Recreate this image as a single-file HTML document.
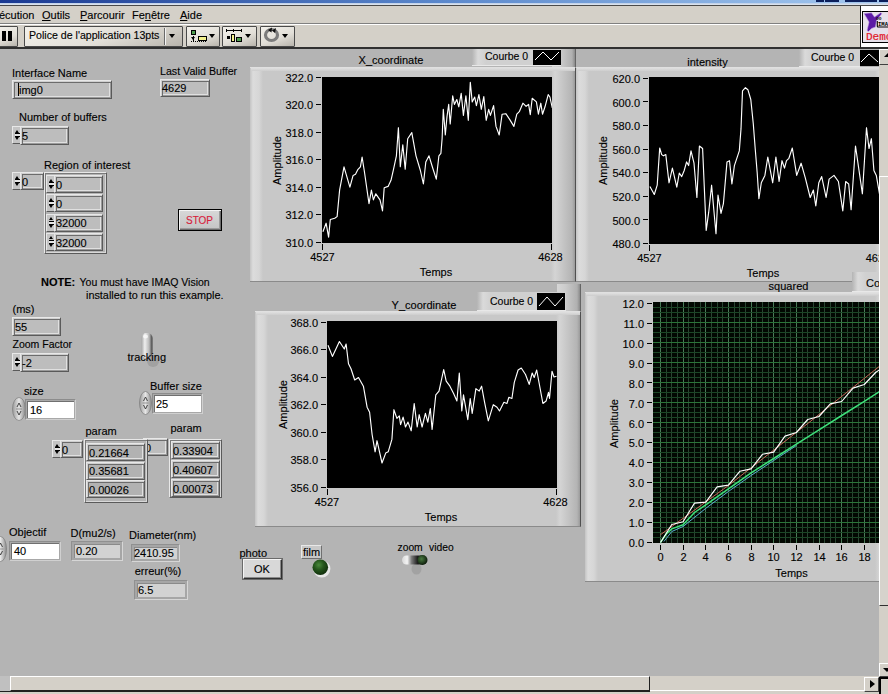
<!DOCTYPE html>
<html><head><meta charset="utf-8"><title>LabVIEW panel</title>
<style>
html,body{margin:0;padding:0;}
body{width:888px;height:694px;overflow:hidden;background:#b4b4b4;font-family:"Liberation Sans", sans-serif;}
.page{position:relative;width:888px;height:694px;overflow:hidden;background:#b4b4b4;}
.t{position:absolute;white-space:nowrap;line-height:1;font-family:"Liberation Sans", sans-serif;-webkit-text-stroke-width:0.12px;}
.tri{position:absolute;width:0;height:0;border-left:4px solid transparent;border-right:4px solid transparent;border-top:4px solid #000;}
u{text-decoration:underline;}
</style></head><body>
<div class="page">
<div style="position:absolute;left:0px;top:0px;width:888px;height:3px;background:linear-gradient(90deg,#1b3a92 0%,#5b88cc 50%,#a6caf0 100%)"></div>
<div style="position:absolute;left:816px;top:0px;width:8px;height:2px;background:#0b1f5c"></div>
<div style="position:absolute;left:825px;top:0px;width:14px;height:2px;background:#0b1f5c"></div>
<div style="position:absolute;left:845px;top:0px;width:32px;height:2px;background:#0b1f5c"></div>
<div style="position:absolute;left:879px;top:0px;width:9px;height:2px;background:#0b1f5c"></div>
<div style="position:absolute;left:0px;top:3px;width:888px;height:2px;background:linear-gradient(180deg,#b8cce8,#e4e8ee)"></div>
<div style="position:absolute;left:0px;top:5px;width:888px;height:1px;background:#4a4a4a"></div>
<div style="position:absolute;left:0px;top:6px;width:888px;height:17px;background:#d4d0c8"></div>
<div style="position:absolute;left:0px;top:23px;width:888px;height:1px;background:#808080"></div>
<div style="position:absolute;left:0px;top:24px;width:888px;height:1px;background:#ffffff"></div>
<div style="position:absolute;left:0px;top:25px;width:888px;height:22px;background:#d4d0c8"></div>
<div style="position:absolute;left:0px;top:47px;width:888px;height:2px;background:#303030"></div>
<div class="t" style="left:-1px;top:10.19px;font-size:11px;color:#000;">écution</div>
<div class="t" style="left:42px;top:10.19px;font-size:11px;color:#000;"><u>O</u>utils</div>
<div class="t" style="left:80px;top:10.19px;font-size:11px;color:#000;"><u>P</u>arcourir</div>
<div class="t" style="left:132px;top:10.19px;font-size:11px;color:#000;">Fe<u>n</u>être</div>
<div class="t" style="left:180px;top:10.19px;font-size:11px;color:#000;"><u>A</u>ide</div>
<div style="position:absolute;left:-2px;top:26px;width:20px;height:21px;background:linear-gradient(160deg,#f2f0ea 0%,#e2dfd8 55%,#b8b4ac 100%);border:1px solid #4a4a4a;box-sizing:border-box;border-radius:1px"></div>
<div style="position:absolute;left:2px;top:31px;width:4px;height:10px;background:#000"></div>
<div style="position:absolute;left:8px;top:31px;width:4px;height:10px;background:#000"></div>
<div style="position:absolute;left:24px;top:26px;width:159px;height:21px;background:linear-gradient(160deg,#f2f0ea 0%,#e2dfd8 55%,#b8b4ac 100%);border:1px solid #4a4a4a;box-sizing:border-box;border-radius:1px"></div>
<div class="t" style="left:29px;top:29.83px;font-size:10.6px;color:#000;">Police de l'application 13pts</div>
<div style="position:absolute;left:164px;top:28px;width:1px;height:17px;background:#6a6a6a"></div>
<div style="position:absolute;left:165px;top:28px;width:1px;height:17px;background:#f4f4f4"></div>
<div class="tri" style="left:169px;top:34px;border-left-width:3px;border-right-width:3px;border-top-width:4px"></div>
<div style="position:absolute;left:186px;top:26px;width:34px;height:21px;background:linear-gradient(160deg,#f2f0ea 0%,#e2dfd8 55%,#b8b4ac 100%);border:1px solid #4a4a4a;box-sizing:border-box;border-radius:1px"></div>
<div style="position:absolute;left:222px;top:26px;width:35px;height:21px;background:linear-gradient(160deg,#f2f0ea 0%,#e2dfd8 55%,#b8b4ac 100%);border:1px solid #4a4a4a;box-sizing:border-box;border-radius:1px"></div>
<div style="position:absolute;left:260px;top:26px;width:35px;height:21px;background:linear-gradient(160deg,#f2f0ea 0%,#e2dfd8 55%,#b8b4ac 100%);border:1px solid #4a4a4a;box-sizing:border-box;border-radius:1px"></div>
<div style="position:absolute;left:191px;top:30px;width:5px;height:5px;background:#4c9c4c;border:1px solid #000;box-sizing:border-box"></div>
<div style="position:absolute;left:193px;top:36px;width:1px;height:6px;background:#000"></div>
<div style="position:absolute;left:191px;top:37px;width:0;height:0;border-left:2.5px solid transparent;border-right:2.5px solid transparent;border-top:3px solid #000"></div>
<div style="position:absolute;left:191px;top:41px;width:1px;height:1px;background:#000"></div>
<div style="position:absolute;left:193px;top:41px;width:1px;height:1px;background:#000"></div>
<div style="position:absolute;left:195px;top:41px;width:1px;height:1px;background:#000"></div>
<div style="position:absolute;left:197px;top:41px;width:1px;height:1px;background:#000"></div>
<div style="position:absolute;left:199px;top:41px;width:1px;height:1px;background:#000"></div>
<div style="position:absolute;left:201px;top:41px;width:1px;height:1px;background:#000"></div>
<div style="position:absolute;left:203px;top:41px;width:1px;height:1px;background:#000"></div>
<div style="position:absolute;left:205px;top:41px;width:1px;height:1px;background:#000"></div>
<div style="position:absolute;left:198px;top:36px;width:9px;height:5px;background:#f2f08c;border:1px solid #000;box-sizing:border-box"></div>
<div class="tri" style="left:209px;top:34px;border-left-width:3px;border-right-width:3px;border-top-width:4px"></div>
<div style="position:absolute;left:226px;top:30px;width:16px;height:1px;background:#000"></div>
<div style="position:absolute;left:226px;top:29px;width:1px;height:3px;background:#000"></div>
<div style="position:absolute;left:233px;top:29px;width:1px;height:3px;background:#000"></div>
<div style="position:absolute;left:241px;top:29px;width:1px;height:3px;background:#000"></div>
<div style="position:absolute;left:227px;top:36px;width:3px;height:3px;background:#000"></div>
<div style="position:absolute;left:231px;top:34px;width:4px;height:8px;background:#f2f08c;border:1px solid #000;box-sizing:border-box"></div>
<div style="position:absolute;left:236px;top:37px;width:6px;height:5px;background:#4c9c4c;border:1px solid #000;box-sizing:border-box"></div>
<div class="tri" style="left:245px;top:34px;border-left-width:3px;border-right-width:3px;border-top-width:4px"></div>
<svg style="position:absolute;left:263px;top:27px" width="18" height="16"><ellipse cx="8.5" cy="8" rx="6" ry="5.5" fill="none" stroke="#7c7c7c" stroke-width="3.2"/><path d="M5 3 L9 0.5 L8.5 5.5 Z M9 3.5 L13 1 L12 6 Z" fill="#111"/></svg>
<div class="tri" style="left:282px;top:34px;border-left-width:3px;border-right-width:3px;border-top-width:4px"></div>
<div style="position:absolute;left:860px;top:6px;width:1px;height:42px;background:#202020"></div>
<div style="position:absolute;left:861px;top:6px;width:27px;height:41px;background:#ffffff"></div>
<div style="position:absolute;left:862px;top:11px;width:27px;height:32px;background:#e6e0ea;border:1.5px solid #000;box-sizing:border-box"></div>
<svg style="position:absolute;left:862px;top:11px" width="26" height="32"><path d="M2 2.5 L9.5 1.8 L12.5 6 L18.5 1.8 L20 2.6 L14.5 9.5 L13.5 16 L9.5 17.5 L6.5 20.5 L5 19.5 L7 11 Z" fill="#5c1aa6" stroke="#c8a8e8" stroke-width="0.6"/><text x="14" y="8.6" font-size="4.5" font-family="Liberation Mono" font-weight="bold" fill="#000">oo</text><path d="M15.3 10 V15.2 Q15.3 16 16 16 H27" fill="none" stroke="#000" stroke-width="1.1"/><text x="16" y="14.6" font-size="6.2" font-family="Liberation Mono" font-weight="bold" fill="#000" textLength="10" lengthAdjust="spacingAndGlyphs">IMA</text></svg>
<div class="t" style="left:866px;top:31.5px;font-size:11px;color:#e01828;font-family:'Liberation Mono',monospace;-webkit-text-stroke-width:0.2px">Demo</div>
<div class="t" style="left:12px;top:67.69px;font-size:11px;color:#000;">Interface Name</div>
<div style="position:absolute;left:12px;top:80px;width:100px;height:19px;background:#bdbdbd;border-top:1px solid #e8e8e8;border-left:1px solid #e8e8e8;border-right:1px solid #5a5a5a;border-bottom:1px solid #5a5a5a;box-sizing:border-box;box-shadow:inset 1px 1px 0 #cfcfcf, inset 2px 2px 0 #6c6c6c, inset -1px -1px 0 #9a9a9a, inset -2px -2px 0 #e0e0e0"></div>
<div style="position:absolute;left:18px;top:83px;width:1px;height:13px;background:#000"></div>
<div class="t" style="left:19px;top:84.69px;font-size:11px;color:#000;">img0</div>
<div class="t" style="left:160px;top:65.98px;font-size:10.65px;color:#000;">Last Valid Buffer</div>
<div style="position:absolute;left:160px;top:79px;width:50px;height:18px;background:#bdbdbd;border-top:1px solid #e8e8e8;border-left:1px solid #e8e8e8;border-right:1px solid #5a5a5a;border-bottom:1px solid #5a5a5a;box-sizing:border-box;box-shadow:inset 1px 1px 0 #cfcfcf, inset 2px 2px 0 #6c6c6c, inset -1px -1px 0 #9a9a9a, inset -2px -2px 0 #e0e0e0"></div>
<div class="t" style="left:162px;top:82.69px;font-size:11px;color:#000;">4629</div>
<div class="t" style="left:19px;top:111.69px;font-size:11px;color:#000;">Number of buffers</div>
<div style="position:absolute;left:12px;top:126px;width:8px;height:18px;background:#c4c4c4;border-top:1px solid #e8e8e8;border-left:1px solid #e8e8e8;border-bottom:1px solid #5a5a5a;box-sizing:border-box"></div>
<div style="position:absolute;left:15px;top:129.5px;width:0;height:0;border-left:2.5px solid transparent;border-right:2.5px solid transparent;border-bottom:3.5px solid #000"></div>
<div style="position:absolute;left:15px;top:133.0px;width:5px;height:1px;background:#000"></div>
<div style="position:absolute;left:15px;top:134.0px;width:5px;height:2px;background:#e6e6e6"></div>
<div style="position:absolute;left:15px;top:136.0px;width:5px;height:1px;background:#000"></div>
<div style="position:absolute;left:15px;top:137.0px;width:0;height:0;border-left:2.5px solid transparent;border-right:2.5px solid transparent;border-top:3.5px solid #000"></div>
<div style="position:absolute;left:20px;top:126px;width:49px;height:19px;background:#bdbdbd;border-top:1px solid #e8e8e8;border-left:1px solid #e8e8e8;border-right:1px solid #5a5a5a;border-bottom:1px solid #5a5a5a;box-sizing:border-box;box-shadow:inset 1px 1px 0 #cfcfcf, inset 2px 2px 0 #6c6c6c, inset -1px -1px 0 #9a9a9a, inset -2px -2px 0 #e0e0e0"></div>
<div class="t" style="left:22px;top:130.69px;font-size:11px;color:#000;">5</div>
<div class="t" style="left:44px;top:160.19px;font-size:11px;color:#000;">Region of interest</div>
<div style="position:absolute;left:12px;top:172px;width:8px;height:18px;background:#c4c4c4;border-top:1px solid #e8e8e8;border-left:1px solid #e8e8e8;border-bottom:1px solid #5a5a5a;box-sizing:border-box"></div>
<div style="position:absolute;left:15px;top:175.5px;width:0;height:0;border-left:2.5px solid transparent;border-right:2.5px solid transparent;border-bottom:3.5px solid #000"></div>
<div style="position:absolute;left:15px;top:179.0px;width:5px;height:1px;background:#000"></div>
<div style="position:absolute;left:15px;top:180.0px;width:5px;height:2px;background:#e6e6e6"></div>
<div style="position:absolute;left:15px;top:182.0px;width:5px;height:1px;background:#000"></div>
<div style="position:absolute;left:15px;top:183.0px;width:0;height:0;border-left:2.5px solid transparent;border-right:2.5px solid transparent;border-top:3.5px solid #000"></div>
<div style="position:absolute;left:20px;top:172px;width:24px;height:18px;background:#bdbdbd;border-top:1px solid #e8e8e8;border-left:1px solid #e8e8e8;border-right:1px solid #5a5a5a;border-bottom:1px solid #5a5a5a;box-sizing:border-box;box-shadow:inset 1px 1px 0 #cfcfcf, inset 2px 2px 0 #6c6c6c, inset -1px -1px 0 #9a9a9a, inset -2px -2px 0 #e0e0e0"></div>
<div class="t" style="left:22px;top:176.69px;font-size:11px;color:#000;">0</div>
<div style="position:absolute;left:44px;top:172px;width:63px;height:82px;border-top:1px solid #e8e8e8;border-left:1px solid #e8e8e8;border-right:1px solid #5a5a5a;border-bottom:1px solid #5a5a5a;box-sizing:border-box;box-shadow:inset 1px 1px 0 #7a7a7a, inset -1px -1px 0 #d8d8d8"></div>
<div style="position:absolute;left:46px;top:175.0px;width:8px;height:18px;background:#c4c4c4;border-top:1px solid #e8e8e8;border-left:1px solid #e8e8e8;border-bottom:1px solid #5a5a5a;box-sizing:border-box"></div>
<div style="position:absolute;left:49px;top:178.5px;width:0;height:0;border-left:2.5px solid transparent;border-right:2.5px solid transparent;border-bottom:3.5px solid #000"></div>
<div style="position:absolute;left:49px;top:182.0px;width:5px;height:1px;background:#000"></div>
<div style="position:absolute;left:49px;top:183.0px;width:5px;height:2px;background:#e6e6e6"></div>
<div style="position:absolute;left:49px;top:185.0px;width:5px;height:1px;background:#000"></div>
<div style="position:absolute;left:49px;top:186.0px;width:0;height:0;border-left:2.5px solid transparent;border-right:2.5px solid transparent;border-top:3.5px solid #000"></div>
<div style="position:absolute;left:54px;top:175.0px;width:49px;height:18px;background:#bdbdbd;border-top:1px solid #e8e8e8;border-left:1px solid #e8e8e8;border-right:1px solid #5a5a5a;border-bottom:1px solid #5a5a5a;box-sizing:border-box;box-shadow:inset 1px 1px 0 #cfcfcf, inset 2px 2px 0 #6c6c6c, inset -1px -1px 0 #9a9a9a, inset -2px -2px 0 #e0e0e0"></div>
<div class="t" style="left:56px;top:179.69px;font-size:11px;color:#000;">0</div>
<div style="position:absolute;left:46px;top:194.3px;width:8px;height:18px;background:#c4c4c4;border-top:1px solid #e8e8e8;border-left:1px solid #e8e8e8;border-bottom:1px solid #5a5a5a;box-sizing:border-box"></div>
<div style="position:absolute;left:49px;top:197.8px;width:0;height:0;border-left:2.5px solid transparent;border-right:2.5px solid transparent;border-bottom:3.5px solid #000"></div>
<div style="position:absolute;left:49px;top:201.3px;width:5px;height:1px;background:#000"></div>
<div style="position:absolute;left:49px;top:202.3px;width:5px;height:2px;background:#e6e6e6"></div>
<div style="position:absolute;left:49px;top:204.3px;width:5px;height:1px;background:#000"></div>
<div style="position:absolute;left:49px;top:205.3px;width:0;height:0;border-left:2.5px solid transparent;border-right:2.5px solid transparent;border-top:3.5px solid #000"></div>
<div style="position:absolute;left:54px;top:194.3px;width:49px;height:18px;background:#bdbdbd;border-top:1px solid #e8e8e8;border-left:1px solid #e8e8e8;border-right:1px solid #5a5a5a;border-bottom:1px solid #5a5a5a;box-sizing:border-box;box-shadow:inset 1px 1px 0 #cfcfcf, inset 2px 2px 0 #6c6c6c, inset -1px -1px 0 #9a9a9a, inset -2px -2px 0 #e0e0e0"></div>
<div class="t" style="left:56px;top:198.99px;font-size:11px;color:#000;">0</div>
<div style="position:absolute;left:46px;top:213.6px;width:8px;height:18px;background:#c4c4c4;border-top:1px solid #e8e8e8;border-left:1px solid #e8e8e8;border-bottom:1px solid #5a5a5a;box-sizing:border-box"></div>
<div style="position:absolute;left:49px;top:217.1px;width:0;height:0;border-left:2.5px solid transparent;border-right:2.5px solid transparent;border-bottom:3.5px solid #000"></div>
<div style="position:absolute;left:49px;top:220.6px;width:5px;height:1px;background:#000"></div>
<div style="position:absolute;left:49px;top:221.6px;width:5px;height:2px;background:#e6e6e6"></div>
<div style="position:absolute;left:49px;top:223.6px;width:5px;height:1px;background:#000"></div>
<div style="position:absolute;left:49px;top:224.6px;width:0;height:0;border-left:2.5px solid transparent;border-right:2.5px solid transparent;border-top:3.5px solid #000"></div>
<div style="position:absolute;left:54px;top:213.6px;width:49px;height:18px;background:#bdbdbd;border-top:1px solid #e8e8e8;border-left:1px solid #e8e8e8;border-right:1px solid #5a5a5a;border-bottom:1px solid #5a5a5a;box-sizing:border-box;box-shadow:inset 1px 1px 0 #cfcfcf, inset 2px 2px 0 #6c6c6c, inset -1px -1px 0 #9a9a9a, inset -2px -2px 0 #e0e0e0"></div>
<div class="t" style="left:56px;top:218.29px;font-size:11px;color:#000;">32000</div>
<div style="position:absolute;left:46px;top:232.9px;width:8px;height:18px;background:#c4c4c4;border-top:1px solid #e8e8e8;border-left:1px solid #e8e8e8;border-bottom:1px solid #5a5a5a;box-sizing:border-box"></div>
<div style="position:absolute;left:49px;top:236.4px;width:0;height:0;border-left:2.5px solid transparent;border-right:2.5px solid transparent;border-bottom:3.5px solid #000"></div>
<div style="position:absolute;left:49px;top:239.9px;width:5px;height:1px;background:#000"></div>
<div style="position:absolute;left:49px;top:240.9px;width:5px;height:2px;background:#e6e6e6"></div>
<div style="position:absolute;left:49px;top:242.9px;width:5px;height:1px;background:#000"></div>
<div style="position:absolute;left:49px;top:243.9px;width:0;height:0;border-left:2.5px solid transparent;border-right:2.5px solid transparent;border-top:3.5px solid #000"></div>
<div style="position:absolute;left:54px;top:232.9px;width:49px;height:18px;background:#bdbdbd;border-top:1px solid #e8e8e8;border-left:1px solid #e8e8e8;border-right:1px solid #5a5a5a;border-bottom:1px solid #5a5a5a;box-sizing:border-box;box-shadow:inset 1px 1px 0 #cfcfcf, inset 2px 2px 0 #6c6c6c, inset -1px -1px 0 #9a9a9a, inset -2px -2px 0 #e0e0e0"></div>
<div class="t" style="left:56px;top:237.59px;font-size:11px;color:#000;">32000</div>
<div style="position:absolute;left:178px;top:209px;width:44px;height:22px;background:linear-gradient(180deg,#d8d8d8,#c4c4c4);border:1px solid #000;box-sizing:border-box;box-shadow:inset 1px 1px 0 #f4f4f4, inset -1px -1px 0 #6a6a6a, inset -2px -2px 0 #9a9a9a"></div>
<div class="t" style="left:-0.5px;width:400px;text-align:center;top:216.34px;font-size:10px;color:#d8203a;">STOP</div>
<div class="t" style="left:41px;top:276.69px;font-size:11px;color:#000;"><b>NOTE:</b></div>
<div class="t" style="left:79.5px;top:277.11px;font-size:10.5px;color:#000;">You must have IMAQ Vision</div>
<div class="t" style="left:86px;top:289.82px;font-size:10.85px;color:#000;">installed to run this example.</div>
<div class="t" style="left:12.5px;top:304.19px;font-size:11px;color:#000;">(ms)</div>
<div style="position:absolute;left:12px;top:317px;width:49px;height:19px;background:#bdbdbd;border-top:1px solid #e8e8e8;border-left:1px solid #e8e8e8;border-right:1px solid #5a5a5a;border-bottom:1px solid #5a5a5a;box-sizing:border-box;box-shadow:inset 1px 1px 0 #cfcfcf, inset 2px 2px 0 #6c6c6c, inset -1px -1px 0 #9a9a9a, inset -2px -2px 0 #e0e0e0"></div>
<div class="t" style="left:15px;top:321.69px;font-size:11px;color:#000;">55</div>
<div class="t" style="left:12.5px;top:339.11px;font-size:10.5px;color:#000;">Zoom Factor</div>
<div style="position:absolute;left:12px;top:353px;width:8px;height:18px;background:#c4c4c4;border-top:1px solid #e8e8e8;border-left:1px solid #e8e8e8;border-bottom:1px solid #5a5a5a;box-sizing:border-box"></div>
<div style="position:absolute;left:15px;top:356.5px;width:0;height:0;border-left:2.5px solid transparent;border-right:2.5px solid transparent;border-bottom:3.5px solid #000"></div>
<div style="position:absolute;left:15px;top:360.0px;width:5px;height:1px;background:#000"></div>
<div style="position:absolute;left:15px;top:361.0px;width:5px;height:2px;background:#e6e6e6"></div>
<div style="position:absolute;left:15px;top:363.0px;width:5px;height:1px;background:#000"></div>
<div style="position:absolute;left:15px;top:364.0px;width:0;height:0;border-left:2.5px solid transparent;border-right:2.5px solid transparent;border-top:3.5px solid #000"></div>
<div style="position:absolute;left:20px;top:353px;width:49px;height:19px;background:#bdbdbd;border-top:1px solid #e8e8e8;border-left:1px solid #e8e8e8;border-right:1px solid #5a5a5a;border-bottom:1px solid #5a5a5a;box-sizing:border-box;box-shadow:inset 1px 1px 0 #cfcfcf, inset 2px 2px 0 #6c6c6c, inset -1px -1px 0 #9a9a9a, inset -2px -2px 0 #e0e0e0"></div>
<div class="t" style="left:22px;top:357.69px;font-size:11px;color:#000;">-2</div>
<svg style="position:absolute;left:136px;top:330px" width="28" height="40"><defs><linearGradient id="tg1" x1="0" x2="1"><stop offset="0" stop-color="#a8a8a8"/><stop offset="0.3" stop-color="#eeeeee"/><stop offset="0.7" stop-color="#b8b8b8"/><stop offset="1" stop-color="#3a3a3a"/></linearGradient></defs><ellipse cx="17" cy="31" rx="6" ry="6" fill="#8a8a8a" opacity="0.45"/><rect x="5.5" y="3" width="11" height="25" rx="5" fill="url(#tg1)"/><ellipse cx="9.5" cy="6.5" rx="2.5" ry="2" fill="#fafafa" opacity="0.8"/></svg>
<div class="t" style="left:127.5px;top:352.19px;font-size:11px;color:#000;">tracking</div>
<div class="t" style="left:24px;top:385.69px;font-size:11px;color:#000;">size</div>
<svg style="position:absolute;left:12px;top:397px" width="14" height="24"><defs><linearGradient id="ov12397" x1="0" x2="1"><stop offset="0" stop-color="#9a9a9a"/><stop offset="0.5" stop-color="#e6e6e6"/><stop offset="1" stop-color="#8a8a8a"/></linearGradient></defs><ellipse cx="7.0" cy="12.0" rx="6.5" ry="11.5" fill="url(#ov12397)" stroke="#7a7a7a" stroke-width="0.7"/><path d="M5.0 10.0 L7.0 6.0 L9.0 10.0" fill="none" stroke="#333" stroke-width="0.9"/><path d="M5.0 14.0 L7.0 18.0 L9.0 14.0" fill="none" stroke="#333" stroke-width="0.9"/><line x1="4.0" y1="12.0" x2="10.0" y2="12.0" stroke="#777" stroke-width="0.7"/></svg>
<div style="position:absolute;left:25px;top:399px;width:51px;height:21px;background:#a8a8a8;border-top:1px solid #8c8c8c;border-left:1px solid #8c8c8c;border-right:1px solid #d0d0d0;border-bottom:1px solid #d0d0d0;box-sizing:border-box"></div>
<div style="position:absolute;left:27px;top:401px;width:47px;height:17px;background:#ffffff;border-top:1px solid #707070;border-left:1px solid #707070;box-sizing:border-box"></div>
<div class="t" style="left:30px;top:405.19px;font-size:11px;color:#000;">16</div>
<div class="t" style="left:150px;top:380.69px;font-size:11px;color:#000;">Buffer size</div>
<svg style="position:absolute;left:139px;top:391px" width="13" height="24"><defs><linearGradient id="ov139391" x1="0" x2="1"><stop offset="0" stop-color="#9a9a9a"/><stop offset="0.5" stop-color="#e6e6e6"/><stop offset="1" stop-color="#8a8a8a"/></linearGradient></defs><ellipse cx="6.5" cy="12.0" rx="6.0" ry="11.5" fill="url(#ov139391)" stroke="#7a7a7a" stroke-width="0.7"/><path d="M4.5 10.0 L6.5 6.0 L8.5 10.0" fill="none" stroke="#333" stroke-width="0.9"/><path d="M4.5 14.0 L6.5 18.0 L8.5 14.0" fill="none" stroke="#333" stroke-width="0.9"/><line x1="3.5" y1="12.0" x2="9.5" y2="12.0" stroke="#777" stroke-width="0.7"/></svg>
<div style="position:absolute;left:152px;top:393px;width:51px;height:21px;background:#a8a8a8;border-top:1px solid #8c8c8c;border-left:1px solid #8c8c8c;border-right:1px solid #d0d0d0;border-bottom:1px solid #d0d0d0;box-sizing:border-box"></div>
<div style="position:absolute;left:154px;top:395px;width:47px;height:17px;background:#ffffff;border-top:1px solid #707070;border-left:1px solid #707070;box-sizing:border-box"></div>
<div class="t" style="left:156px;top:399.19px;font-size:11px;color:#000;">25</div>
<div class="t" style="left:85.5px;top:425.69px;font-size:11px;color:#000;">param</div>
<div style="position:absolute;left:52px;top:440px;width:8px;height:18px;background:#c4c4c4;border-top:1px solid #e8e8e8;border-left:1px solid #e8e8e8;border-bottom:1px solid #5a5a5a;box-sizing:border-box"></div>
<div style="position:absolute;left:55px;top:443.5px;width:0;height:0;border-left:2.5px solid transparent;border-right:2.5px solid transparent;border-bottom:3.5px solid #000"></div>
<div style="position:absolute;left:55px;top:447.0px;width:5px;height:1px;background:#000"></div>
<div style="position:absolute;left:55px;top:448.0px;width:5px;height:2px;background:#e6e6e6"></div>
<div style="position:absolute;left:55px;top:450.0px;width:5px;height:1px;background:#000"></div>
<div style="position:absolute;left:55px;top:451.0px;width:0;height:0;border-left:2.5px solid transparent;border-right:2.5px solid transparent;border-top:3.5px solid #000"></div>
<div style="position:absolute;left:60px;top:440px;width:23px;height:18px;background:#bdbdbd;border-top:1px solid #e8e8e8;border-left:1px solid #e8e8e8;border-right:1px solid #5a5a5a;border-bottom:1px solid #5a5a5a;box-sizing:border-box;box-shadow:inset 1px 1px 0 #cfcfcf, inset 2px 2px 0 #6c6c6c, inset -1px -1px 0 #9a9a9a, inset -2px -2px 0 #e0e0e0"></div>
<div class="t" style="left:62px;top:444.69px;font-size:11px;color:#000;">0</div>
<div style="position:absolute;left:143px;top:438px;width:25px;height:18px;background:#bdbdbd;border-top:1px solid #e8e8e8;border-left:1px solid #e8e8e8;border-right:1px solid #5a5a5a;border-bottom:1px solid #5a5a5a;box-sizing:border-box;box-shadow:inset 1px 1px 0 #cfcfcf, inset 2px 2px 0 #6c6c6c, inset -1px -1px 0 #9a9a9a, inset -2px -2px 0 #e0e0e0"></div>
<div class="t" style="left:145px;top:442.69px;font-size:11px;color:#000;">0</div>
<div style="position:absolute;left:84px;top:439px;width:64px;height:64px;background:#b4b4b4;border-top:1px solid #e8e8e8;border-left:1px solid #e8e8e8;border-right:1px solid #5a5a5a;border-bottom:1px solid #5a5a5a;box-sizing:border-box;box-shadow:inset 1px 1px 0 #7a7a7a, inset -1px -1px 0 #d8d8d8"></div>
<div style="position:absolute;left:86px;top:443.0px;width:59px;height:18px;background:#b2b2b2;border-top:1px solid #e8e8e8;border-left:1px solid #e8e8e8;border-right:1px solid #5a5a5a;border-bottom:1px solid #5a5a5a;box-sizing:border-box;box-shadow:inset 1px 1px 0 #cfcfcf, inset 2px 2px 0 #6c6c6c, inset -1px -1px 0 #9a9a9a, inset -2px -2px 0 #e0e0e0"></div>
<div class="t" style="left:89px;top:447.69px;font-size:11px;color:#000;">0.21664</div>
<div style="position:absolute;left:86px;top:461.7px;width:59px;height:18px;background:#b2b2b2;border-top:1px solid #e8e8e8;border-left:1px solid #e8e8e8;border-right:1px solid #5a5a5a;border-bottom:1px solid #5a5a5a;box-sizing:border-box;box-shadow:inset 1px 1px 0 #cfcfcf, inset 2px 2px 0 #6c6c6c, inset -1px -1px 0 #9a9a9a, inset -2px -2px 0 #e0e0e0"></div>
<div class="t" style="left:89px;top:466.39px;font-size:11px;color:#000;">0.35681</div>
<div style="position:absolute;left:86px;top:480.4px;width:59px;height:18px;background:#b2b2b2;border-top:1px solid #e8e8e8;border-left:1px solid #e8e8e8;border-right:1px solid #5a5a5a;border-bottom:1px solid #5a5a5a;box-sizing:border-box;box-shadow:inset 1px 1px 0 #cfcfcf, inset 2px 2px 0 #6c6c6c, inset -1px -1px 0 #9a9a9a, inset -2px -2px 0 #e0e0e0"></div>
<div class="t" style="left:89px;top:485.09px;font-size:11px;color:#000;">0.00026</div>
<div class="t" style="left:170.5px;top:423.19px;font-size:11px;color:#000;">param</div>
<div style="position:absolute;left:169px;top:439px;width:53px;height:59px;border-top:1px solid #e8e8e8;border-left:1px solid #e8e8e8;border-right:1px solid #5a5a5a;border-bottom:1px solid #5a5a5a;box-sizing:border-box;box-shadow:inset 1px 1px 0 #7a7a7a, inset -1px -1px 0 #d8d8d8"></div>
<div style="position:absolute;left:171px;top:441px;width:49px;height:18px;background:#b2b2b2;border-top:1px solid #e8e8e8;border-left:1px solid #e8e8e8;border-right:1px solid #5a5a5a;border-bottom:1px solid #5a5a5a;box-sizing:border-box;box-shadow:inset 1px 1px 0 #cfcfcf, inset 2px 2px 0 #6c6c6c, inset -1px -1px 0 #9a9a9a, inset -2px -2px 0 #e0e0e0"></div>
<div class="t" style="left:173px;top:445.69px;font-size:11px;color:#000;">0.33904</div>
<div style="position:absolute;left:171px;top:460px;width:49px;height:18px;background:#b2b2b2;border-top:1px solid #e8e8e8;border-left:1px solid #e8e8e8;border-right:1px solid #5a5a5a;border-bottom:1px solid #5a5a5a;box-sizing:border-box;box-shadow:inset 1px 1px 0 #cfcfcf, inset 2px 2px 0 #6c6c6c, inset -1px -1px 0 #9a9a9a, inset -2px -2px 0 #e0e0e0"></div>
<div class="t" style="left:173px;top:464.69px;font-size:11px;color:#000;">0.40607</div>
<div style="position:absolute;left:171px;top:479px;width:49px;height:18px;background:#b2b2b2;border-top:1px solid #e8e8e8;border-left:1px solid #e8e8e8;border-right:1px solid #5a5a5a;border-bottom:1px solid #5a5a5a;box-sizing:border-box;box-shadow:inset 1px 1px 0 #cfcfcf, inset 2px 2px 0 #6c6c6c, inset -1px -1px 0 #9a9a9a, inset -2px -2px 0 #e0e0e0"></div>
<div class="t" style="left:173px;top:483.69px;font-size:11px;color:#000;">0.00073</div>
<div class="t" style="left:9px;top:526.69px;font-size:11px;color:#000;">Objectif</div>
<svg style="position:absolute;left:-6px;top:536px" width="13" height="26"><defs><linearGradient id="ov-6536" x1="0" x2="1"><stop offset="0" stop-color="#9a9a9a"/><stop offset="0.5" stop-color="#e6e6e6"/><stop offset="1" stop-color="#8a8a8a"/></linearGradient></defs><ellipse cx="6.5" cy="13.0" rx="6.0" ry="12.5" fill="url(#ov-6536)" stroke="#7a7a7a" stroke-width="0.7"/><path d="M4.5 11.0 L6.5 7.0 L8.5 11.0" fill="none" stroke="#333" stroke-width="0.9"/><path d="M4.5 15.0 L6.5 19.0 L8.5 15.0" fill="none" stroke="#333" stroke-width="0.9"/><line x1="3.5" y1="13.0" x2="9.5" y2="13.0" stroke="#777" stroke-width="0.7"/></svg>
<div style="position:absolute;left:9px;top:541px;width:52px;height:20px;background:#a8a8a8;border-top:1px solid #8c8c8c;border-left:1px solid #8c8c8c;border-right:1px solid #d0d0d0;border-bottom:1px solid #d0d0d0;box-sizing:border-box"></div>
<div style="position:absolute;left:11px;top:543px;width:48px;height:16px;background:#ffffff;border-top:1px solid #707070;border-left:1px solid #707070;box-sizing:border-box"></div>
<div class="t" style="left:14px;top:546.19px;font-size:11px;color:#000;">40</div>
<div class="t" style="left:70.5px;top:527.69px;font-size:11px;color:#000;">D(mu2/s)</div>
<div style="position:absolute;left:71px;top:541px;width:52px;height:20px;background:#a6a6a6;border-top:1px solid #909090;border-left:1px solid #909090;border-right:1px solid #d6d6d6;border-bottom:1px solid #d6d6d6;box-sizing:border-box"></div>
<div style="position:absolute;left:74px;top:544px;width:46px;height:14px;background:#d2d2d2;border-top:1px solid #8a8a8a;border-left:1px solid #8a8a8a;box-sizing:border-box"></div>
<div class="t" style="left:76px;top:546.19px;font-size:11px;color:#000;">0.20</div>
<div class="t" style="left:129px;top:529.69px;font-size:11px;color:#000;">Diameter(nm)</div>
<div style="position:absolute;left:131px;top:544px;width:49px;height:18px;background:#a6a6a6;border-top:1px solid #909090;border-left:1px solid #909090;border-right:1px solid #d6d6d6;border-bottom:1px solid #d6d6d6;box-sizing:border-box"></div>
<div style="position:absolute;left:134px;top:547px;width:43px;height:12px;background:#d2d2d2;border-top:1px solid #8a8a8a;border-left:1px solid #8a8a8a;box-sizing:border-box"></div>
<div class="t" style="left:134px;top:548.19px;font-size:11px;color:#000;">2410.95</div>
<div class="t" style="left:134.7px;top:566.19px;font-size:11px;color:#000;">erreur(%)</div>
<div style="position:absolute;left:134px;top:580px;width:54px;height:20px;background:#a6a6a6;border-top:1px solid #909090;border-left:1px solid #909090;border-right:1px solid #d6d6d6;border-bottom:1px solid #d6d6d6;box-sizing:border-box"></div>
<div style="position:absolute;left:137px;top:583px;width:48px;height:14px;background:#d2d2d2;border-top:1px solid #8a8a8a;border-left:1px solid #8a8a8a;box-sizing:border-box"></div>
<div class="t" style="left:138px;top:585.19px;font-size:11px;color:#000;">6.5</div>
<div class="t" style="left:239.5px;top:548.19px;font-size:11px;color:#000;">photo</div>
<div style="position:absolute;left:243px;top:559px;width:39px;height:20px;background:#d8d8d8;border-top:1px solid #f4f4f4;border-left:1px solid #f4f4f4;border-right:1px solid #303030;border-bottom:1px solid #303030;box-sizing:border-box;box-shadow:inset -1px -1px 0 #8a8a8a, 0 0 0 1px #6a6a6a"></div>
<div class="t" style="left:62px;width:400px;text-align:center;top:563.69px;font-size:11px;color:#000;">OK</div>
<div style="position:absolute;left:301px;top:545px;width:21px;height:14px;background:#c8c8c8;border-top:1px solid #e8e8e8;border-left:1px solid #e8e8e8;border-right:1px solid #707070;border-bottom:1px solid #707070;box-sizing:border-box"></div>
<div class="t" style="left:303px;top:546.69px;font-size:11px;color:#000;">film</div>
<svg style="position:absolute;left:309px;top:556px" width="24" height="24"><defs><radialGradient id="led" cx="0.4" cy="0.35" r="0.7"><stop offset="0" stop-color="#4a8a3c"/><stop offset="0.45" stop-color="#25561c"/><stop offset="1" stop-color="#0e2a0a"/></radialGradient></defs><circle cx="12.8" cy="12.8" r="8.6" fill="#e8e8e8"/><circle cx="11.3" cy="11.3" r="7.8" fill="url(#led)"/></svg>
<div class="t" style="left:397.5px;top:543.28px;font-size:10.3px;color:#000;">zoom</div>
<div class="t" style="left:429px;top:543.28px;font-size:10.3px;color:#000;">video</div>
<svg style="position:absolute;left:400px;top:552px" width="32" height="24"><defs><linearGradient id="tg2" x1="0" x2="1"><stop offset="0" stop-color="#d8d8d8"/><stop offset="0.22" stop-color="#f4f4f4"/><stop offset="0.4" stop-color="#7a7a7a"/><stop offset="0.65" stop-color="#1e1e1e"/><stop offset="1" stop-color="#1a2a1a"/></linearGradient><radialGradient id="tg3" cx="0.4" cy="0.4" r="0.6"><stop offset="0" stop-color="#4a7a40"/><stop offset="1" stop-color="#0e1e0c"/></radialGradient></defs><ellipse cx="16.5" cy="17" rx="5" ry="5.5" fill="#909090" opacity="0.5"/><rect x="2" y="3.5" width="24" height="9" rx="4.5" fill="url(#tg2)"/><circle cx="22.5" cy="8" r="5" fill="url(#tg3)"/></svg>
<div style="position:absolute;left:552px;top:49px;width:24px;height:20px;background:linear-gradient(90deg,#d6d6d6 0px,#cccccc 8px,#b0b0b0 20px,#8a8a8a 23px,#404040 24px)"></div>
<div style="position:absolute;left:250px;top:67px;width:326px;height:215px;box-sizing:border-box;border-top:1px solid #e0e0e0;border-right:1px solid #505050;border-bottom:1px solid #8a8a8a;background:linear-gradient(90deg,#c4c4c4 0px,#dcdcdc 3px,#d6d6d6 9px,#c8c8c8 13px,#c8c8c8 calc(100% - 24px),#d4d4d4 calc(100% - 20px),#b4b4b4 calc(100% - 3px),#9a9a9a 100%)"></div>
<div style="position:absolute;left:251px;top:68px;width:324px;height:3px;background:linear-gradient(180deg,#e0e0e0,#cdcdcd)"></div>
<div class="t" style="left:191px;width:400px;text-align:center;top:54.99px;font-size:11px;color:#000;">X_coordinate</div>
<div style="position:absolute;left:472px;top:49px;width:89px;height:17px;background:linear-gradient(90deg,#b4b4b4 0px,#dadada 6px,#d0d0d0 14px,#d0d0d0 100%);border-bottom:1px solid #e8e8e8;box-sizing:border-box"></div>
<svg style="position:absolute;left:533px;top:50px" width="28" height="15"><rect width="100%" height="100%" fill="#000"/><polyline points="2,10 10,2 18,10 26,2" fill="none" stroke="#fff" stroke-width="1"/></svg>
<div class="t" style="left:485px;top:51.11px;font-size:10.5px;color:#000;">Courbe 0</div>
<svg style="position:absolute;left:322px;top:77px;overflow:hidden" width="230" height="166" viewBox="322 77 230 166"><rect x="322" y="77" width="230" height="166" fill="#000"/><polyline points="322.9,231.7 326.1,223.2 328.6,237.1 330.3,219.5 334.7,218.3 337.1,216.6 339.6,190.1 344.0,166.8 349.9,187.2 353.1,175.4 355.5,174.2 358.0,169.3 360.4,166.8 362.1,157.0 364.6,173.0 369.0,203.6 371.4,190.1 373.4,199.9 375.8,193.8 380.0,199.9 382.5,210.9 384.2,187.7 388.1,186.4 391.0,180.3 393.5,169.3 396.4,155.8 398.4,127.7 400.3,166.8 402.8,144.8 405.2,169.3 407.7,138.7 411.8,132.6 416.0,155.8 420.4,170.5 423.4,184.0 425.8,162.0 429.0,155.8 432.7,168.0 436.3,179.1 438.9,155.8 440.9,153.4 442.1,138.7 443.3,109.3 445.3,135.0 447.0,116.6 448.7,104.4 450.2,124.0 452.7,95.8 454.4,104.4 456.8,99.5 458.8,106.8 461.2,93.4 463.4,115.4 465.9,95.8 468.3,120.3 470.3,82.3 472.2,101.9 474.7,97.0 476.4,105.6 478.9,94.6 481.3,109.3 483.8,96.6 486.2,120.3 488.7,109.3 490.4,115.4 493.6,105.6 496.0,126.4 499.2,135.0 502.1,114.2 505.8,113.7 509.5,119.1 513.9,126.4 516.8,114.2 519.3,111.7 522.9,103.2 526.1,106.3 528.6,104.4 530.3,114.7 532.2,98.3 536.4,101.9 538.4,114.2 540.8,103.2 542.5,114.2 545.0,106.8 548.2,94.6 549.9,97.0 552.3,108.0" fill="none" stroke="#fff" stroke-width="1.15" stroke-linejoin="round"/></svg>
<div style="position:absolute;left:316px;top:77px;width:5px;height:1px;background:#000"></div>
<div class="t" style="left:-87px;width:400px;text-align:right;top:72.99px;font-size:11px;color:#000;">322.0</div>
<div style="position:absolute;left:316px;top:104px;width:5px;height:1px;background:#000"></div>
<div class="t" style="left:-87px;width:400px;text-align:right;top:100.47px;font-size:11px;color:#000;">320.0</div>
<div style="position:absolute;left:316px;top:132px;width:5px;height:1px;background:#000"></div>
<div class="t" style="left:-87px;width:400px;text-align:right;top:127.95px;font-size:11px;color:#000;">318.0</div>
<div style="position:absolute;left:316px;top:159px;width:5px;height:1px;background:#000"></div>
<div class="t" style="left:-87px;width:400px;text-align:right;top:155.43px;font-size:11px;color:#000;">316.0</div>
<div style="position:absolute;left:316px;top:187px;width:5px;height:1px;background:#000"></div>
<div class="t" style="left:-87px;width:400px;text-align:right;top:182.91px;font-size:11px;color:#000;">314.0</div>
<div style="position:absolute;left:316px;top:214px;width:5px;height:1px;background:#000"></div>
<div class="t" style="left:-87px;width:400px;text-align:right;top:210.39px;font-size:11px;color:#000;">312.0</div>
<div style="position:absolute;left:316px;top:242px;width:5px;height:1px;background:#000"></div>
<div class="t" style="left:-87px;width:400px;text-align:right;top:237.87px;font-size:11px;color:#000;">310.0</div>
<div style="position:absolute;left:322px;top:244px;width:1px;height:6px;background:#000"></div>
<div style="position:absolute;left:551px;top:244px;width:1px;height:6px;background:#000"></div>
<div class="t" style="left:122.5px;width:400px;text-align:center;top:251.69px;font-size:11px;color:#000;">4527</div>
<div class="t" style="left:350.5px;width:400px;text-align:center;top:251.69px;font-size:11px;color:#000;">4628</div>
<div class="t" style="left:236px;width:400px;text-align:center;top:266.69px;font-size:11px;color:#000;">Temps</div>
<div class="t" style="left:236.5px;top:153.5px;width:80px;text-align:center;font-size:11px;line-height:13px;transform:rotate(-90deg)">Amplitude</div>
<div style="position:absolute;left:576px;top:67px;width:324px;height:215px;box-sizing:border-box;border-top:1px solid #e0e0e0;border-right:1px solid #505050;border-bottom:1px solid #8a8a8a;background:linear-gradient(90deg,#c4c4c4 0px,#dcdcdc 3px,#d6d6d6 9px,#c8c8c8 13px,#c8c8c8 calc(100% - 24px),#d4d4d4 calc(100% - 20px),#b4b4b4 calc(100% - 3px),#9a9a9a 100%)"></div>
<div style="position:absolute;left:577px;top:68px;width:322px;height:3px;background:linear-gradient(180deg,#e0e0e0,#cdcdcd)"></div>
<div class="t" style="left:507.5px;width:400px;text-align:center;top:56.99px;font-size:11px;color:#000;">intensity</div>
<div style="position:absolute;left:799px;top:49px;width:61px;height:18px;background:linear-gradient(90deg,#b4b4b4 0px,#dadada 6px,#d0d0d0 14px,#d0d0d0 100%);border-bottom:1px solid #e8e8e8;box-sizing:border-box"></div>
<svg style="position:absolute;left:860px;top:50px" width="19" height="16"><rect width="100%" height="100%" fill="#000"/><polyline points="1,12 9,4 18,12" fill="none" stroke="#fff" stroke-width="1"/></svg>
<div class="t" style="left:811px;top:51.61px;font-size:10.5px;color:#000;">Courbe 0</div>
<svg style="position:absolute;left:649px;top:77px;overflow:hidden" width="230" height="167" viewBox="649 77 230 167"><rect x="649" y="77" width="251" height="167" fill="#000"/><polyline points="649.9,186.4 654.3,194.5 657.2,185.2 659.7,148.0 661.7,154.6 663.4,155.8 665.8,154.6 669.0,182.8 672.4,168.1 676.8,187.2 679.3,173.0 681.7,176.6 684.2,170.5 686.6,161.9 688.6,165.6 691.0,150.9 694.0,163.2 696.9,197.5 699.4,146.0 702.6,148.5 706.2,230.5 708.7,212.2 711.6,185.2 716.0,233.7 718.0,195.0 721.0,213.4 723.4,203.6 727.0,161.9 729.5,160.7 731.9,184.0 734.4,165.6 739.3,150.9 741.0,128.9 742.5,90.9 745.4,87.7 747.9,89.7 750.8,99.5 753.3,124.0 755.2,148.5 757.2,173.0 758.9,198.7 761.3,182.8 764.9,175.4 767.8,157.0 772.7,182.8 775.9,157.0 779.1,181.5 782.0,160.7 784.5,168.1 786.5,160.7 788.9,158.3 792.3,148.0 796.7,175.4 801.1,163.2 805.3,177.9 810.2,197.5 813.4,190.1 815.8,206.0 818.8,182.8 821.7,176.6 826.1,197.5 829.1,179.1 834.0,175.4 838.4,181.5 842.8,210.9 845.7,181.5 848.7,184.0 851.1,209.7 855.5,146.0 862.4,193.8 866.5,127.7 869.0,148.5 871.4,138.7 873.9,170.5 876.3,175.4 879.5,193.8" fill="none" stroke="#fff" stroke-width="1.15" stroke-linejoin="round"/></svg>
<div style="position:absolute;left:643px;top:78px;width:5px;height:1px;background:#000"></div>
<div class="t" style="left:240px;width:400px;text-align:right;top:74.04px;font-size:11px;color:#000;">620.0</div>
<div style="position:absolute;left:643px;top:101px;width:5px;height:1px;background:#000"></div>
<div class="t" style="left:240px;width:400px;text-align:right;top:97.62px;font-size:11px;color:#000;">600.0</div>
<div style="position:absolute;left:643px;top:125px;width:5px;height:1px;background:#000"></div>
<div class="t" style="left:240px;width:400px;text-align:right;top:121.20px;font-size:11px;color:#000;">580.0</div>
<div style="position:absolute;left:643px;top:149px;width:5px;height:1px;background:#000"></div>
<div class="t" style="left:240px;width:400px;text-align:right;top:144.78px;font-size:11px;color:#000;">560.0</div>
<div style="position:absolute;left:643px;top:172px;width:5px;height:1px;background:#000"></div>
<div class="t" style="left:240px;width:400px;text-align:right;top:168.36px;font-size:11px;color:#000;">540.0</div>
<div style="position:absolute;left:643px;top:196px;width:5px;height:1px;background:#000"></div>
<div class="t" style="left:240px;width:400px;text-align:right;top:191.94px;font-size:11px;color:#000;">520.0</div>
<div style="position:absolute;left:643px;top:219px;width:5px;height:1px;background:#000"></div>
<div class="t" style="left:240px;width:400px;text-align:right;top:215.52px;font-size:11px;color:#000;">500.0</div>
<div style="position:absolute;left:643px;top:243px;width:5px;height:1px;background:#000"></div>
<div class="t" style="left:240px;width:400px;text-align:right;top:239.10px;font-size:11px;color:#000;">480.0</div>
<div style="position:absolute;left:649px;top:245px;width:1px;height:6px;background:#000"></div>
<div class="t" style="left:449.5px;width:400px;text-align:center;top:252.69px;font-size:11px;color:#000;">4527</div>
<div class="t" style="left:678px;width:400px;text-align:center;top:252.69px;font-size:11px;color:#000;">4628</div>
<div class="t" style="left:563px;width:400px;text-align:center;top:268.19px;font-size:11px;color:#000;">Temps</div>
<div class="t" style="left:562.5px;top:154.0px;width:80px;text-align:center;font-size:11px;line-height:13px;transform:rotate(-90deg)">Amplitude</div>
<div style="position:absolute;left:557px;top:284px;width:24px;height:29px;background:linear-gradient(90deg,#d6d6d6 0px,#cccccc 8px,#b0b0b0 20px,#8a8a8a 23px,#404040 24px)"></div>
<div style="position:absolute;left:255px;top:311px;width:326px;height:216px;box-sizing:border-box;border-top:1px solid #e0e0e0;border-right:1px solid #505050;border-bottom:1px solid #8a8a8a;background:linear-gradient(90deg,#c4c4c4 0px,#dcdcdc 3px,#d6d6d6 9px,#c8c8c8 13px,#c8c8c8 calc(100% - 24px),#d4d4d4 calc(100% - 20px),#b4b4b4 calc(100% - 3px),#9a9a9a 100%)"></div>
<div style="position:absolute;left:256px;top:312px;width:324px;height:3px;background:linear-gradient(180deg,#e0e0e0,#cdcdcd)"></div>
<div class="t" style="left:224px;width:400px;text-align:center;top:299.69px;font-size:11px;color:#000;">Y_coordinate</div>
<div style="position:absolute;left:477px;top:292px;width:89px;height:19px;background:linear-gradient(90deg,#b4b4b4 0px,#dadada 6px,#d0d0d0 14px,#d0d0d0 100%);border-bottom:1px solid #e8e8e8;box-sizing:border-box"></div>
<svg style="position:absolute;left:537px;top:293px" width="28" height="17"><rect width="100%" height="100%" fill="#000"/><polyline points="2,13 10,4 18,13 26,4" fill="none" stroke="#fff" stroke-width="1"/></svg>
<div class="t" style="left:490px;top:296.11px;font-size:10.5px;color:#000;">Courbe 0</div>
<svg style="position:absolute;left:327px;top:321px;overflow:hidden" width="230" height="167" viewBox="327 321 230 167"><rect x="327" y="321" width="230" height="167" fill="#000"/><polyline points="328.0,345.3 332.4,356.4 339.4,341.5 344.3,349.0 346.1,344.0 348.5,363.8 351.0,368.8 354.7,380.0 358.5,377.5 363.4,386.2 367.1,407.2 369.6,412.2 372.1,434.5 375.1,451.8 377.0,440.7 382.0,463.0 385.7,453.1 388.2,451.8 391.9,439.4 393.9,409.7 396.9,418.4 399.3,415.9 400.6,424.6 403.1,417.1 405.5,427.0 408.0,422.1 411.2,430.8 414.2,403.5 417.2,427.0 419.2,414.7 422.1,427.0 425.4,413.4 427.8,422.1 430.3,408.5 432.1,429.5 435.8,394.8 439.0,391.1 443.7,369.5 446.2,381.2 449.9,386.2 453.6,393.6 456.9,401.0 459.3,373.0 461.8,410.9 463.5,394.8 467.8,419.6 470.2,398.5 472.2,413.4 475.9,388.6 479.2,391.1 481.6,386.2 484.6,402.3 488.3,420.8 493.3,404.7 497.0,407.2 499.5,411.0 503.9,402.3 506.9,403.5 508.9,397.3 511.9,398.5 514.3,382.4 518.1,370.0 521.3,368.0 525.5,374.5 529.2,384.4 532.2,373.0 534.2,377.5 536.7,370.0 542.9,403.5 546.1,401.0 548.5,392.3 549.5,398.5 552.0,371.3 554.0,377.0 556.5,376.2" fill="none" stroke="#fff" stroke-width="1.15" stroke-linejoin="round"/></svg>
<div style="position:absolute;left:321px;top:322px;width:5px;height:1px;background:#000"></div>
<div class="t" style="left:-82px;width:400px;text-align:right;top:317.89px;font-size:11px;color:#000;">368.0</div>
<div style="position:absolute;left:321px;top:349px;width:5px;height:1px;background:#000"></div>
<div class="t" style="left:-82px;width:400px;text-align:right;top:345.41px;font-size:11px;color:#000;">366.0</div>
<div style="position:absolute;left:321px;top:377px;width:5px;height:1px;background:#000"></div>
<div class="t" style="left:-82px;width:400px;text-align:right;top:372.93px;font-size:11px;color:#000;">364.0</div>
<div style="position:absolute;left:321px;top:404px;width:5px;height:1px;background:#000"></div>
<div class="t" style="left:-82px;width:400px;text-align:right;top:400.45px;font-size:11px;color:#000;">362.0</div>
<div style="position:absolute;left:321px;top:432px;width:5px;height:1px;background:#000"></div>
<div class="t" style="left:-82px;width:400px;text-align:right;top:427.97px;font-size:11px;color:#000;">360.0</div>
<div style="position:absolute;left:321px;top:459px;width:5px;height:1px;background:#000"></div>
<div class="t" style="left:-82px;width:400px;text-align:right;top:455.49px;font-size:11px;color:#000;">358.0</div>
<div style="position:absolute;left:321px;top:487px;width:5px;height:1px;background:#000"></div>
<div class="t" style="left:-82px;width:400px;text-align:right;top:483.01px;font-size:11px;color:#000;">356.0</div>
<div style="position:absolute;left:327px;top:489px;width:1px;height:6px;background:#000"></div>
<div style="position:absolute;left:556px;top:489px;width:1px;height:6px;background:#000"></div>
<div class="t" style="left:127px;width:400px;text-align:center;top:496.69px;font-size:11px;color:#000;">4527</div>
<div class="t" style="left:355.5px;width:400px;text-align:center;top:496.69px;font-size:11px;color:#000;">4628</div>
<div class="t" style="left:241px;width:400px;text-align:center;top:512.19px;font-size:11px;color:#000;">Temps</div>
<div class="t" style="left:242.5px;top:397.5px;width:80px;text-align:center;font-size:11px;line-height:13px;transform:rotate(-90deg)">Amplitude</div>
<div style="position:absolute;left:585px;top:292px;width:315px;height:290px;box-sizing:border-box;border-top:1px solid #e0e0e0;border-right:1px solid #505050;border-bottom:1px solid #8a8a8a;background:linear-gradient(90deg,#c4c4c4 0px,#dcdcdc 3px,#d6d6d6 9px,#c8c8c8 13px,#c8c8c8 calc(100% - 24px),#d4d4d4 calc(100% - 20px),#b4b4b4 calc(100% - 3px),#9a9a9a 100%)"></div>
<div style="position:absolute;left:586px;top:293px;width:313px;height:3px;background:linear-gradient(180deg,#e0e0e0,#cdcdcd)"></div>
<div class="t" style="left:588.5px;width:400px;text-align:center;top:280.69px;font-size:11px;color:#000;">squared</div>
<div style="position:absolute;left:852px;top:272px;width:30px;height:20px;background:linear-gradient(90deg,#b4b4b4 0px,#dadada 6px,#d0d0d0 14px);border-bottom:1px solid #e8e8e8;box-sizing:border-box"></div>
<div class="t" style="left:866px;top:277.69px;font-size:11px;color:#000;">Courbe 0</div>
<svg style="position:absolute;left:653px;top:302px;overflow:hidden" width="226" height="241" viewBox="653 302 226 241"><rect x="653" y="302" width="247" height="241" fill="#020802"/><line x1="660.5" y1="302" x2="660.5" y2="543" stroke="#4a7a58" stroke-width="1"/><line x1="666.5" y1="302" x2="666.5" y2="543" stroke="#2a4432" stroke-width="1"/><line x1="671.5" y1="302" x2="671.5" y2="543" stroke="#2a4432" stroke-width="1"/><line x1="677.5" y1="302" x2="677.5" y2="543" stroke="#2a4432" stroke-width="1"/><line x1="683.5" y1="302" x2="683.5" y2="543" stroke="#4a7a58" stroke-width="1"/><line x1="688.5" y1="302" x2="688.5" y2="543" stroke="#2a4432" stroke-width="1"/><line x1="694.5" y1="302" x2="694.5" y2="543" stroke="#2a4432" stroke-width="1"/><line x1="700.5" y1="302" x2="700.5" y2="543" stroke="#2a4432" stroke-width="1"/><line x1="705.5" y1="302" x2="705.5" y2="543" stroke="#4a7a58" stroke-width="1"/><line x1="711.5" y1="302" x2="711.5" y2="543" stroke="#2a4432" stroke-width="1"/><line x1="717.5" y1="302" x2="717.5" y2="543" stroke="#2a4432" stroke-width="1"/><line x1="722.5" y1="302" x2="722.5" y2="543" stroke="#2a4432" stroke-width="1"/><line x1="728.5" y1="302" x2="728.5" y2="543" stroke="#4a7a58" stroke-width="1"/><line x1="734.5" y1="302" x2="734.5" y2="543" stroke="#2a4432" stroke-width="1"/><line x1="739.5" y1="302" x2="739.5" y2="543" stroke="#2a4432" stroke-width="1"/><line x1="745.5" y1="302" x2="745.5" y2="543" stroke="#2a4432" stroke-width="1"/><line x1="751.5" y1="302" x2="751.5" y2="543" stroke="#4a7a58" stroke-width="1"/><line x1="756.5" y1="302" x2="756.5" y2="543" stroke="#2a4432" stroke-width="1"/><line x1="762.5" y1="302" x2="762.5" y2="543" stroke="#2a4432" stroke-width="1"/><line x1="768.5" y1="302" x2="768.5" y2="543" stroke="#2a4432" stroke-width="1"/><line x1="773.5" y1="302" x2="773.5" y2="543" stroke="#4a7a58" stroke-width="1"/><line x1="779.5" y1="302" x2="779.5" y2="543" stroke="#2a4432" stroke-width="1"/><line x1="785.5" y1="302" x2="785.5" y2="543" stroke="#2a4432" stroke-width="1"/><line x1="790.5" y1="302" x2="790.5" y2="543" stroke="#2a4432" stroke-width="1"/><line x1="796.5" y1="302" x2="796.5" y2="543" stroke="#4a7a58" stroke-width="1"/><line x1="802.5" y1="302" x2="802.5" y2="543" stroke="#2a4432" stroke-width="1"/><line x1="807.5" y1="302" x2="807.5" y2="543" stroke="#2a4432" stroke-width="1"/><line x1="813.5" y1="302" x2="813.5" y2="543" stroke="#2a4432" stroke-width="1"/><line x1="819.5" y1="302" x2="819.5" y2="543" stroke="#4a7a58" stroke-width="1"/><line x1="824.5" y1="302" x2="824.5" y2="543" stroke="#2a4432" stroke-width="1"/><line x1="830.5" y1="302" x2="830.5" y2="543" stroke="#2a4432" stroke-width="1"/><line x1="835.5" y1="302" x2="835.5" y2="543" stroke="#2a4432" stroke-width="1"/><line x1="841.5" y1="302" x2="841.5" y2="543" stroke="#4a7a58" stroke-width="1"/><line x1="847.5" y1="302" x2="847.5" y2="543" stroke="#2a4432" stroke-width="1"/><line x1="852.5" y1="302" x2="852.5" y2="543" stroke="#2a4432" stroke-width="1"/><line x1="858.5" y1="302" x2="858.5" y2="543" stroke="#2a4432" stroke-width="1"/><line x1="864.5" y1="302" x2="864.5" y2="543" stroke="#4a7a58" stroke-width="1"/><line x1="869.5" y1="302" x2="869.5" y2="543" stroke="#2a4432" stroke-width="1"/><line x1="875.5" y1="302" x2="875.5" y2="543" stroke="#2a4432" stroke-width="1"/><line x1="881.5" y1="302" x2="881.5" y2="543" stroke="#2a4432" stroke-width="1"/><line x1="886.5" y1="302" x2="886.5" y2="543" stroke="#4a7a58" stroke-width="1"/><line x1="892.5" y1="302" x2="892.5" y2="543" stroke="#2a4432" stroke-width="1"/><line x1="898.5" y1="302" x2="898.5" y2="543" stroke="#2a4432" stroke-width="1"/><line x1="653" y1="537.5" x2="900" y2="537.5" stroke="#1b4626" stroke-width="1"/><line x1="653" y1="532.5" x2="900" y2="532.5" stroke="#1b4626" stroke-width="1"/><line x1="653" y1="527.5" x2="900" y2="527.5" stroke="#1b4626" stroke-width="1"/><line x1="653" y1="522.5" x2="900" y2="522.5" stroke="#2a7438" stroke-width="1"/><line x1="653" y1="517.5" x2="900" y2="517.5" stroke="#1b4626" stroke-width="1"/><line x1="653" y1="512.5" x2="900" y2="512.5" stroke="#1b4626" stroke-width="1"/><line x1="653" y1="507.5" x2="900" y2="507.5" stroke="#1b4626" stroke-width="1"/><line x1="653" y1="502.5" x2="900" y2="502.5" stroke="#2a7438" stroke-width="1"/><line x1="653" y1="497.5" x2="900" y2="497.5" stroke="#1b4626" stroke-width="1"/><line x1="653" y1="492.5" x2="900" y2="492.5" stroke="#1b4626" stroke-width="1"/><line x1="653" y1="487.5" x2="900" y2="487.5" stroke="#1b4626" stroke-width="1"/><line x1="653" y1="482.5" x2="900" y2="482.5" stroke="#2a7438" stroke-width="1"/><line x1="653" y1="477.5" x2="900" y2="477.5" stroke="#1b4626" stroke-width="1"/><line x1="653" y1="472.5" x2="900" y2="472.5" stroke="#1b4626" stroke-width="1"/><line x1="653" y1="467.5" x2="900" y2="467.5" stroke="#1b4626" stroke-width="1"/><line x1="653" y1="462.5" x2="900" y2="462.5" stroke="#2a7438" stroke-width="1"/><line x1="653" y1="457.5" x2="900" y2="457.5" stroke="#1b4626" stroke-width="1"/><line x1="653" y1="452.5" x2="900" y2="452.5" stroke="#1b4626" stroke-width="1"/><line x1="653" y1="447.5" x2="900" y2="447.5" stroke="#1b4626" stroke-width="1"/><line x1="653" y1="442.5" x2="900" y2="442.5" stroke="#2a7438" stroke-width="1"/><line x1="653" y1="437.5" x2="900" y2="437.5" stroke="#1b4626" stroke-width="1"/><line x1="653" y1="432.5" x2="900" y2="432.5" stroke="#1b4626" stroke-width="1"/><line x1="653" y1="427.5" x2="900" y2="427.5" stroke="#1b4626" stroke-width="1"/><line x1="653" y1="422.5" x2="900" y2="422.5" stroke="#2a7438" stroke-width="1"/><line x1="653" y1="417.5" x2="900" y2="417.5" stroke="#1b4626" stroke-width="1"/><line x1="653" y1="412.5" x2="900" y2="412.5" stroke="#1b4626" stroke-width="1"/><line x1="653" y1="407.5" x2="900" y2="407.5" stroke="#1b4626" stroke-width="1"/><line x1="653" y1="402.5" x2="900" y2="402.5" stroke="#2a7438" stroke-width="1"/><line x1="653" y1="397.5" x2="900" y2="397.5" stroke="#1b4626" stroke-width="1"/><line x1="653" y1="392.5" x2="900" y2="392.5" stroke="#1b4626" stroke-width="1"/><line x1="653" y1="387.5" x2="900" y2="387.5" stroke="#1b4626" stroke-width="1"/><line x1="653" y1="382.5" x2="900" y2="382.5" stroke="#2a7438" stroke-width="1"/><line x1="653" y1="377.5" x2="900" y2="377.5" stroke="#1b4626" stroke-width="1"/><line x1="653" y1="372.5" x2="900" y2="372.5" stroke="#1b4626" stroke-width="1"/><line x1="653" y1="367.5" x2="900" y2="367.5" stroke="#1b4626" stroke-width="1"/><line x1="653" y1="362.5" x2="900" y2="362.5" stroke="#2a7438" stroke-width="1"/><line x1="653" y1="357.5" x2="900" y2="357.5" stroke="#1b4626" stroke-width="1"/><line x1="653" y1="352.5" x2="900" y2="352.5" stroke="#1b4626" stroke-width="1"/><line x1="653" y1="347.5" x2="900" y2="347.5" stroke="#1b4626" stroke-width="1"/><line x1="653" y1="342.5" x2="900" y2="342.5" stroke="#2a7438" stroke-width="1"/><line x1="653" y1="337.5" x2="900" y2="337.5" stroke="#1b4626" stroke-width="1"/><line x1="653" y1="332.5" x2="900" y2="332.5" stroke="#1b4626" stroke-width="1"/><line x1="653" y1="327.5" x2="900" y2="327.5" stroke="#1b4626" stroke-width="1"/><line x1="653" y1="322.5" x2="900" y2="322.5" stroke="#2a7438" stroke-width="1"/><line x1="653" y1="317.5" x2="900" y2="317.5" stroke="#1b4626" stroke-width="1"/><line x1="653" y1="312.5" x2="900" y2="312.5" stroke="#1b4626" stroke-width="1"/><line x1="653" y1="307.5" x2="900" y2="307.5" stroke="#1b4626" stroke-width="1"/><polyline points="660.5,534.7 728.4,485.5 810.0,421.7 878.7,366.9 898.3,351.5" fill="none" stroke="#c86858" stroke-width="1.0" stroke-linejoin="round"/><polyline points="663.9,541.5 671.8,531.5 683.1,526.5 705.8,508.3 728.4,491.5 751.1,475.5 773.7,460.5 796.4,445.5" fill="none" stroke="#5ab0d0" stroke-width="1.0" stroke-linejoin="round"/><polyline points="660.5,542.5 666.2,534.1 671.8,528.9 683.1,524.7 694.5,512.5 705.8,504.9 728.4,488.9 751.1,472.9 773.7,458.5 796.4,444.1 819.0,429.9 841.7,415.5 864.3,401.3 886.9,386.9" fill="none" stroke="#3ee07a" stroke-width="1.5" stroke-linejoin="round"/><polyline points="660.5,542.5 671.8,524.5 683.1,521.7 694.5,503.1 705.8,502.1 717.1,486.9 728.4,485.1 739.8,471.3 751.1,468.9 762.4,454.3 773.7,452.1 785.0,436.1 796.4,432.5 807.7,419.5 819.0,416.5 830.3,403.9 841.7,401.5 853.0,388.1 864.3,384.5 875.6,372.5 886.9,364.5" fill="none" stroke="#ffffff" stroke-width="1.15" stroke-linejoin="round"/></svg>
<div style="position:absolute;left:647px;top:303px;width:5px;height:1px;background:#000"></div>
<div class="t" style="left:244px;width:400px;text-align:right;top:298.99px;font-size:11px;color:#000;">12.0</div>
<div style="position:absolute;left:647px;top:323px;width:5px;height:1px;background:#000"></div>
<div class="t" style="left:244px;width:400px;text-align:right;top:318.91px;font-size:11px;color:#000;">11.0</div>
<div style="position:absolute;left:647px;top:343px;width:5px;height:1px;background:#000"></div>
<div class="t" style="left:244px;width:400px;text-align:right;top:338.83px;font-size:11px;color:#000;">10.0</div>
<div style="position:absolute;left:647px;top:363px;width:5px;height:1px;background:#000"></div>
<div class="t" style="left:244px;width:400px;text-align:right;top:358.75px;font-size:11px;color:#000;">9.0</div>
<div style="position:absolute;left:647px;top:382px;width:5px;height:1px;background:#000"></div>
<div class="t" style="left:244px;width:400px;text-align:right;top:378.67px;font-size:11px;color:#000;">8.0</div>
<div style="position:absolute;left:647px;top:402px;width:5px;height:1px;background:#000"></div>
<div class="t" style="left:244px;width:400px;text-align:right;top:398.59px;font-size:11px;color:#000;">7.0</div>
<div style="position:absolute;left:647px;top:422px;width:5px;height:1px;background:#000"></div>
<div class="t" style="left:244px;width:400px;text-align:right;top:418.51px;font-size:11px;color:#000;">6.0</div>
<div style="position:absolute;left:647px;top:442px;width:5px;height:1px;background:#000"></div>
<div class="t" style="left:244px;width:400px;text-align:right;top:438.43px;font-size:11px;color:#000;">5.0</div>
<div style="position:absolute;left:647px;top:462px;width:5px;height:1px;background:#000"></div>
<div class="t" style="left:244px;width:400px;text-align:right;top:458.35px;font-size:11px;color:#000;">4.0</div>
<div style="position:absolute;left:647px;top:482px;width:5px;height:1px;background:#000"></div>
<div class="t" style="left:244px;width:400px;text-align:right;top:478.27px;font-size:11px;color:#000;">3.0</div>
<div style="position:absolute;left:647px;top:502px;width:5px;height:1px;background:#000"></div>
<div class="t" style="left:244px;width:400px;text-align:right;top:498.19px;font-size:11px;color:#000;">2.0</div>
<div style="position:absolute;left:647px;top:522px;width:5px;height:1px;background:#000"></div>
<div class="t" style="left:244px;width:400px;text-align:right;top:518.11px;font-size:11px;color:#000;">1.0</div>
<div style="position:absolute;left:647px;top:542px;width:5px;height:1px;background:#000"></div>
<div class="t" style="left:244px;width:400px;text-align:right;top:538.03px;font-size:11px;color:#000;">0.0</div>
<div style="position:absolute;left:660px;top:545px;width:1px;height:5px;background:#000"></div>
<div class="t" style="left:460.5px;width:400px;text-align:center;top:552.19px;font-size:11px;color:#000;">0</div>
<div style="position:absolute;left:683px;top:545px;width:1px;height:5px;background:#000"></div>
<div class="t" style="left:483.5px;width:400px;text-align:center;top:552.19px;font-size:11px;color:#000;">2</div>
<div style="position:absolute;left:705px;top:545px;width:1px;height:5px;background:#000"></div>
<div class="t" style="left:505.5px;width:400px;text-align:center;top:552.19px;font-size:11px;color:#000;">4</div>
<div style="position:absolute;left:728px;top:545px;width:1px;height:5px;background:#000"></div>
<div class="t" style="left:528.5px;width:400px;text-align:center;top:552.19px;font-size:11px;color:#000;">6</div>
<div style="position:absolute;left:751px;top:545px;width:1px;height:5px;background:#000"></div>
<div class="t" style="left:551.5px;width:400px;text-align:center;top:552.19px;font-size:11px;color:#000;">8</div>
<div style="position:absolute;left:773px;top:545px;width:1px;height:5px;background:#000"></div>
<div class="t" style="left:573.5px;width:400px;text-align:center;top:552.19px;font-size:11px;color:#000;">10</div>
<div style="position:absolute;left:796px;top:545px;width:1px;height:5px;background:#000"></div>
<div class="t" style="left:596.5px;width:400px;text-align:center;top:552.19px;font-size:11px;color:#000;">12</div>
<div style="position:absolute;left:819px;top:545px;width:1px;height:5px;background:#000"></div>
<div class="t" style="left:619.5px;width:400px;text-align:center;top:552.19px;font-size:11px;color:#000;">14</div>
<div style="position:absolute;left:841px;top:545px;width:1px;height:5px;background:#000"></div>
<div class="t" style="left:641.5px;width:400px;text-align:center;top:552.19px;font-size:11px;color:#000;">16</div>
<div style="position:absolute;left:864px;top:545px;width:1px;height:5px;background:#000"></div>
<div class="t" style="left:664.5px;width:400px;text-align:center;top:552.19px;font-size:11px;color:#000;">18</div>
<div class="t" style="left:591.5px;width:400px;text-align:center;top:568.19px;font-size:11px;color:#000;">Temps</div>
<div class="t" style="left:574px;top:416.5px;width:80px;text-align:center;font-size:11px;line-height:13px;transform:rotate(-90deg)">Amplitude</div>
<div style="position:absolute;left:879px;top:49px;width:9px;height:628px;background:#d4d0c8"></div>
<div style="position:absolute;left:879px;top:176px;width:9px;height:430px;background:#d6d3cc;border-top:1px solid #fff;border-left:1px solid #fff;border-bottom:1px solid #303030;box-sizing:border-box"></div>
<div style="position:absolute;left:879px;top:49px;width:9px;height:16px;background:#d4d0c8;border-top:1px solid #fff;border-left:1px solid #fff;border-bottom:1px solid #404040;box-sizing:border-box"></div>
<div style="position:absolute;left:884px;top:53px;width:0;height:0;border-left:4px solid transparent;border-right:4px solid transparent;border-bottom:4px solid #000"></div>
<div style="position:absolute;left:879px;top:663px;width:9px;height:14px;background:#d4d0c8;border-top:1px solid #fff;border-left:1px solid #fff;border-bottom:1px solid #404040;box-sizing:border-box"></div>
<div style="position:absolute;left:883px;top:668px;width:0;height:0;border-left:4px solid transparent;border-right:4px solid transparent;border-top:4px solid #000"></div>
<div style="position:absolute;left:0px;top:676px;width:879px;height:18px;background:#d4d0c8"></div>
<div style="position:absolute;left:0px;top:676px;width:10px;height:15px;background:#c0c0c0"></div>
<div style="position:absolute;left:10px;top:676px;width:640px;height:15px;background:#d4d0c8;border-top:1px solid #fff;border-left:1px solid #fff;border-right:1px solid #202020;border-bottom:1px solid #202020;box-sizing:border-box"></div>
<div style="position:absolute;left:650px;top:690px;width:214px;height:1px;background:#ffffff"></div>
<div style="position:absolute;left:0px;top:691px;width:650px;height:1px;background:#202020"></div>
<div style="position:absolute;left:864px;top:677px;width:15px;height:15px;background:#d4d0c8;border-top:1px solid #fff;border-left:1px solid #fff;border-right:1px solid #404040;border-bottom:1px solid #404040;box-sizing:border-box"></div>
<div style="position:absolute;left:870px;top:680px;width:0;height:0;border-top:4px solid transparent;border-bottom:4px solid transparent;border-left:5px solid #000"></div>
<div style="position:absolute;left:879px;top:677px;width:9px;height:17px;background:#d4d0c8;border-top:2px solid #000;border-left:2px solid #000;box-sizing:border-box"></div>
</div>
</body></html>
